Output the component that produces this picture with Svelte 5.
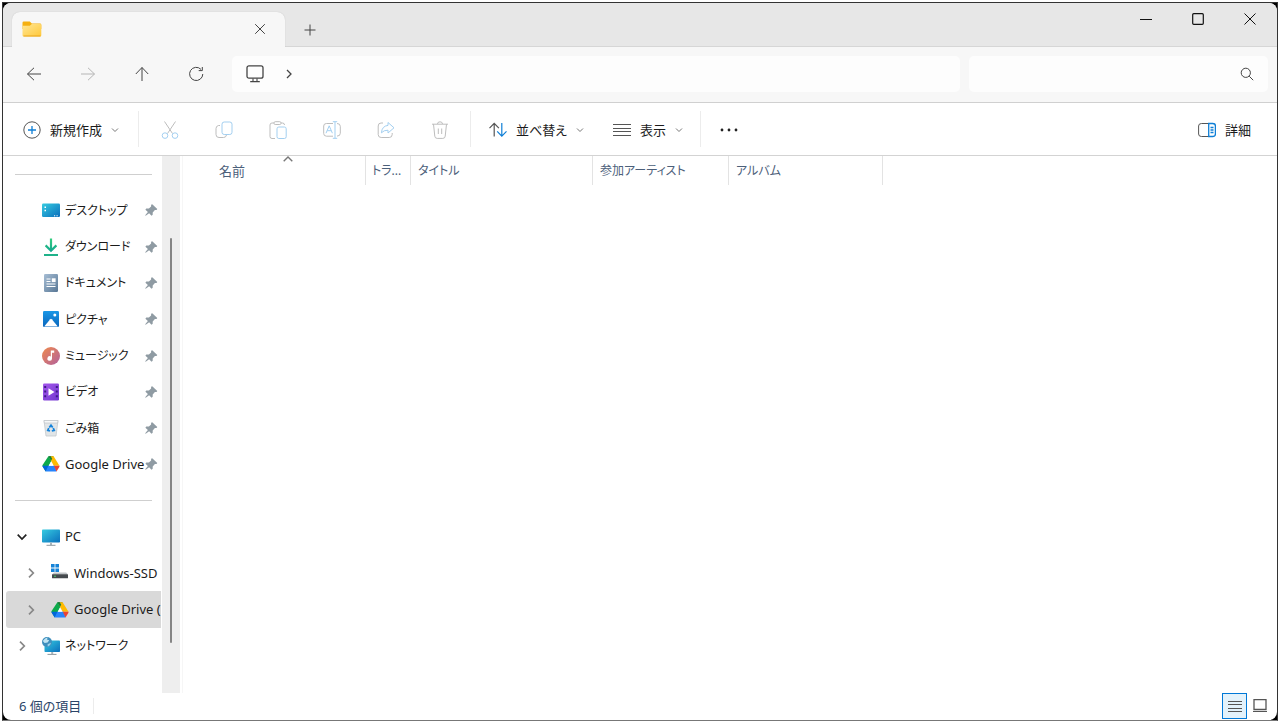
<script lang="ts">
	type Place = { name: string; icon: string };
	type Node = Place & { level: number; open?: boolean; selected?: boolean };

	const pinned: Place[] = [
		{ name: 'デスクトップ', icon: 'desktop' },
		{ name: 'ダウンロード', icon: 'download' },
		{ name: 'ドキュメント', icon: 'document' },
		{ name: 'ピクチャ', icon: 'picture' },
		{ name: 'ミュージック', icon: 'music' },
		{ name: 'ビデオ', icon: 'video' },
		{ name: 'ごみ箱', icon: 'trash' },
		{ name: 'Google Drive', icon: 'gdrive' }
	];

	const tree: Node[] = [
		{ name: 'PC', icon: 'pc', level: 0, open: true },
		{ name: 'Windows-SSD', icon: 'ssd', level: 1 },
		{ name: 'Google Drive (', icon: 'gdrive', level: 1, selected: true },
		{ name: 'ネットワーク', icon: 'network', level: 0 }
	];

	const columns = ['名前', 'トラ...', 'タイトル', '参加アーティスト', 'アルバム'];

	let address = $state('');
	let query = $state('');

	// kana runs wider than latin, so it is set one size down
	const isLatin = (name: string) => /^[A-Za-z]/.test(name);
</script>

{#snippet placeIcon(name: string)}
	<svg class="place-icon" viewBox="0 0 18 18" aria-hidden="true">
		{#if name === 'desktop'}
			<rect x="0" y="2.5" width="18" height="13.5" rx="1.2" fill="url(#teal)" />
			<path d="M2.5 6.2H4M2.5 9.5H4" stroke="#fff" stroke-width="1.5" />
			<path d="M12 14.8h1.2M14.5 14.8h1.2" stroke="#fff" stroke-width="1" />
		{:else if name === 'download'}
			<path d="M9 .5V12M3.6 7.4L9 12.8l5.4-5.4" fill="none" stroke="url(#green)" stroke-width="2.2" />
			<path d="M2 17h14" stroke="#1fb28a" stroke-width="2" />
		{:else if name === 'document'}
			<rect x="2" y="0" width="14" height="18" rx="1.2" fill="url(#slate)" />
			<path d="M4.5 5h4M4.5 7.5h4M4.5 10h9M4.5 12.5h9" stroke="#fff" stroke-width="1.2" />
			<rect x="9.8" y="4.3" width="3.8" height="3.8" fill="#fff" />
		{:else if name === 'picture'}
			<rect x="1" y="1" width="16" height="16" rx="1.2" fill="url(#blue)" />
			<path d="M2.2 16.5l6-7.2q.8-.9 1.6 0l6 7.2z" fill="#fff" />
			<circle cx="12.8" cy="5" r="1.5" fill="#fff" />
		{:else if name === 'music'}
			<circle cx="9" cy="9" r="9" fill="url(#coral)" />
			<path d="M8.8 3.5h3.4v2.3H10v5.7a2.3 2.3 0 1 1-1.2-2z" fill="#fff" />
		{:else if name === 'video'}
			<rect x="1" y="0.5" width="16" height="17" rx="1.2" fill="url(#violet)" />
			<path d="M3.2 3v13M14.8 3v13" stroke="#3d1b88" stroke-width="2" stroke-dasharray="2 2.6" />
			<path d="M6.5 5.3l6 3.7-6 3.7z" fill="#fff" />
		{:else if name === 'trash'}
			<path d="M2 1.5h14l-2 15.5H4z" fill="#e1e5e7" stroke="#c3c9cd" stroke-width=".8" />
			<path d="M2 1.5h14l-.4 2.5H2.4z" fill="#f7f8f8" stroke="#b8bec3" stroke-width=".6" />
			<path
				d="M7.3 8.5L9 6.3l1.7 2.2M11.2 9.2l1 2.2-2.4.6M8 12l-2.2-.6 1-2.2"
				fill="none"
				stroke="#1383dc"
				stroke-width="1.8"
			/>
		{:else if name === 'gdrive'}
			<path d="M6.4 1.2h5.2L9 6z" fill="#188038" />
			<path d="M6.4 1.2L9.4 6 3.8 16.4.6 11.2q-.4-.7 0-1.3z" fill="#0caa4b" />
			<path d="M11.6 1.2l5.9 9.6h-5.8L8.4 4.6l.4-3.4z" fill="#ffba00" />
			<path d="M8.7 1.2h-2.3L9 5.8l1.2-2z" fill="#188038" />
			<path d="M5.6 10.8h7l2 5.6H3.6z" fill="#2684fc" />
			<path d="M.4 10.8h6l-2.8 5.6-2.9-4.7z" fill="#0066da" />
			<path d="M11.8 10.8h5.8q0 .6-.3 1.1l-2.8 4.5z" fill="#ea4335" />
			<path d="M9 6.6l2.4 4.2H6.7z" fill="#fff" />
		{:else if name === 'pc'}
			{@render monitor()}
		{:else if name === 'ssd'}
			<path d="M0 0h3.6v3.6H0zM4.4 0H8v3.6H4.4zM0 4.4h3.6V8H0zM4.4 4.4H8V8H4.4z" fill="#1683d8" />
			<path d="M3 8.5h12.2l1.8 2H1z" fill="#bfc3c6" />
			<rect x="1" y="10.3" width="16" height="4" rx=".5" fill="#454a4e" />
			<circle cx="4" cy="12.3" r=".8" fill="#4be06a" />
		{:else if name === 'network'}
			<rect x="2.5" y="3.5" width="15.5" height="11.5" rx=".8" fill="url(#teal)" />
			<path d="M9.2 15h2v2h-2z" fill="#a9b4ba" />
			<path d="M5.5 17.4h9" stroke="#8d989e" stroke-width="1" />
			<circle cx="5" cy="5" r="5" fill="#3f8fbd" />
			<path d="M.8 4q2-3.2 5-3.6L4.8 2.6l2.4.6-1.6 2.4L2.6 6z" fill="#bfe4f3" />
			<path d="M5.6 7.2l3.4-1.4Q8.6 8.8 5.8 9.8z" fill="#9bd3ea" />
		{/if}
	</svg>
{/snippet}

{#snippet monitor()}
	<rect x="0" y="1.5" width="18" height="13" rx=".8" fill="url(#teal)" />
	<path d="M8 14.5h2v2.5H8z" fill="#a9b4ba" />
	<path d="M4.5 17.3h9" stroke="#8d989e" stroke-width="1" />
{/snippet}

{#snippet caret()}
	<svg class="caret" viewBox="0 0 8 8" aria-hidden="true"><path d="M1 2.5l3 3 3-3" /></svg>
{/snippet}

<svg class="defs" aria-hidden="true">
	<defs>
		<linearGradient id="teal" x1="0" y1="0" x2="1" y2="1">
			<stop offset="0" stop-color="#35cbe0" />
			<stop offset="1" stop-color="#0b6fbd" />
		</linearGradient>
		<linearGradient id="green" gradientUnits="userSpaceOnUse" x1="9" y1="0" x2="9" y2="14">
			<stop offset="0" stop-color="#34cf7d" />
			<stop offset="1" stop-color="#12a590" />
		</linearGradient>
		<linearGradient id="slate" x1="0" y1="0" x2="1" y2="1">
			<stop offset="0" stop-color="#a6bdd4" />
			<stop offset="1" stop-color="#587795" />
		</linearGradient>
		<linearGradient id="blue" x1="0" y1="0" x2="0" y2="1">
			<stop offset="0" stop-color="#1a97e6" />
			<stop offset="1" stop-color="#0a66bd" />
		</linearGradient>
		<linearGradient id="coral" x1="0" y1="0" x2="1" y2="1">
			<stop offset="0" stop-color="#f08a4c" />
			<stop offset="1" stop-color="#b1609e" />
		</linearGradient>
		<linearGradient id="violet" x1="0" y1="0" x2="1" y2="1">
			<stop offset="0" stop-color="#a457ec" />
			<stop offset="1" stop-color="#7238cf" />
		</linearGradient>
		<linearGradient id="folder" x1="0" y1="0" x2="1" y2="1">
			<stop offset="0" stop-color="#ffe694" />
			<stop offset="1" stop-color="#ffc83a" />
		</linearGradient>
	</defs>
</svg>

<div class="screen">
	<div class="frame">
		<div class="window">
			<header class="titlebar">
				<div class="tab">
					<svg class="folder" viewBox="0 0 20 16" aria-hidden="true">
						<path d="M1.8.5h6l2 2H18q1.3 0 1.3 1.3V8H.5V1.8Q.5.5 1.8.5z" fill="#f5b011" />
						<path d="M.5 4.8h7.3l2-1.8H18q1.3 0 1.3 1.3v9.9q0 1.3-1.3 1.3H1.8q-1.3 0-1.3-1.3z" fill="url(#folder)" />
						<path d="M1.5 15h17" stroke="#e9a51c" />
					</svg>
					<button class="tab-close" aria-label="タブを閉じる">
						<svg class="icon-12" viewBox="0 0 12 12"><path d="M1.2 1.2l9.6 9.6M10.8 1.2l-9.6 9.6" /></svg>
					</button>
				</div>
				<button class="new-tab" aria-label="新しいタブ">
					<svg class="icon-12" viewBox="0 0 12 12"><path d="M6 .5v11M.5 6h11" /></svg>
				</button>
				<div class="controls">
					<button aria-label="最小化">
						<svg class="icon-12" viewBox="0 0 12 12"><path d="M0 6.5h12" /></svg>
					</button>
					<button aria-label="最大化">
						<svg class="icon-12" viewBox="0 0 12 12"
							><rect x=".7" y=".7" width="10.6" height="10.6" rx="1" stroke-width="1.2" /></svg
						>
					</button>
					<button aria-label="閉じる">
						<svg class="icon-12" viewBox="0 0 12 12"><path d="M.5.5l11 11M11.5.5l-11 11" /></svg>
					</button>
				</div>
			</header>

			<div class="navbar">
				<div class="nav-buttons">
					<button aria-label="戻る">
						<svg class="icon-16" viewBox="0 0 16 16"><path d="M15 8H1.5M8 1.8L1.5 8 8 14.2" /></svg>
					</button>
					<button aria-label="進む" disabled>
						<svg class="icon-16" viewBox="0 0 16 16"><path d="M1 8h13.5M8 1.8L14.5 8 8 14.2" /></svg>
					</button>
					<button aria-label="上へ">
						<svg class="icon-16" viewBox="0 0 16 16"><path d="M8 15V1.5M1.8 8L8 1.5 14.2 8" /></svg>
					</button>
					<button aria-label="更新">
						<svg class="icon-16" viewBox="0 0 16 16"
							><path d="M13 3.4A6.6 6.6 0 1 0 14.8 8M14.3 1v3.6h-3.6" /></svg
						>
					</button>
				</div>
				<div class="address">
					<svg class="icon-18" viewBox="0 0 18 18" aria-hidden="true">
						<rect x="1" y=".8" width="16" height="12.4" rx="2" stroke-width="1.3" />
						<path d="M7 13.5v3M11 13.5v3M4.2 16.6h9.6" stroke-width="1.1" />
					</svg>
					<svg class="crumb" viewBox="0 0 8 12" aria-hidden="true"><path d="M2 2l4 4-4 4" /></svg>
					<input type="text" aria-label="アドレス" bind:value={address} />
				</div>
				<div class="search">
					<input type="text" aria-label="検索" bind:value={query} />
					<svg class="icon-14" viewBox="0 0 14 14" aria-hidden="true">
						<circle cx="5.8" cy="5.8" r="4.6" />
						<path d="M9.2 9.2l4 4" />
					</svg>
				</div>
			</div>

			<div class="toolbar">
				<button class="new">
					<svg class="icon-18" viewBox="0 0 18 18" aria-hidden="true">
						<circle cx="9" cy="9" r="8.2" />
						<path class="accent" d="M9 5v8M5 9h8" stroke-width="1.3" />
					</svg>
					<span>新規作成</span>
					{@render caret()}
				</button>
				<div class="group">
					<button disabled aria-label="切り取り">
						<svg class="icon-18" viewBox="0 0 18 18">
							<path d="M3.5.5l8 12M14.5.5l-8 12" />
							<g class="accent">
								<circle cx="4" cy="14.6" r="2.8" />
								<circle cx="14" cy="14.6" r="2.8" />
							</g>
						</svg>
					</button>
					<button disabled aria-label="コピー">
						<svg class="icon-18" viewBox="0 0 18 18">
							<path d="M5 4.5H3.5Q1 5 1 7.5v6Q1 16.5 4 16.5h4.5q2.5 0 3-2.5" />
							<rect class="accent" x="7" y="1" width="10" height="12.5" rx="2.2" />
						</svg>
					</button>
					<button disabled aria-label="貼り付け">
						<svg class="icon-18" viewBox="0 0 18 18">
							<path d="M5 2H3Q1 2 1 4v11.5q0 2 2 2h3M12 2h1.5q2 0 2 2" />
							<rect x="5" y=".7" width="7" height="2.8" rx="1.2" />
							<rect class="accent" x="8" y="6" width="9.2" height="11.5" rx="1.8" />
						</svg>
					</button>
					<button disabled aria-label="名前の変更">
						<svg class="icon-18" viewBox="0 0 18 18">
							<path d="M10 2.5H3.5Q.7 2.5.7 5v7.5q0 2.7 2.8 2.7H10M14 2.5q3.3 0 3.3 2.8v7q0 2.8-3.3 2.8" />
							<path class="accent" d="M12 .7v16.6M9.8.7h4.4M9.8 17.3h4.4M3 12.2l3.2-7.4 3.2 7.4M4.2 9.7h4" />
						</svg>
					</button>
					<button disabled aria-label="共有">
						<svg class="icon-18" viewBox="0 0 18 18">
							<path d="M6 2H4Q1.2 2 1.2 5v8.5q0 3 3 3h8q3 0 3-3V12" />
							<path
								class="accent"
								d="M11 1.5l6 5.3-6 5.2V9.2q-4-.2-6.6 2.6Q5 5 11 4.4z"
								stroke-linejoin="round"
							/>
						</svg>
					</button>
					<button disabled aria-label="削除">
						<svg class="icon-18" viewBox="0 0 18 18">
							<path
								d="M1 3.2h16M6.5 3Q6.5.8 9 .8T11.5 3M2.5 3.2l1.3 12q.2 2.2 2.4 2.2h5.6q2.2 0 2.4-2.2l1.3-12M7.3 7.5v5.5M10.7 7.5v5.5"
							/>
						</svg>
					</button>
				</div>
				<button class="sort">
					<svg class="icon-18" viewBox="0 0 18 18" aria-hidden="true">
						<path d="M5.2 15.5V2.5M.5 7.2l4.7-4.9 4.7 4.9" stroke-width="1.2" />
						<path class="accent" d="M12.8 2v13M8.2 10.4l4.6 4.8 4.7-4.8" stroke-width="1.2" />
					</svg>
					<span>並べ替え</span>
					{@render caret()}
				</button>
				<button class="view">
					<svg class="icon-18" viewBox="0 0 18 18" aria-hidden="true"
						><path d="M0 3.5h18M0 7.5h18M0 10.5h18M0 14.5h18" /></svg
					>
					<span>表示</span>
					{@render caret()}
				</button>
				<button class="more" aria-label="もっと見る">
					<svg class="icon-18" viewBox="0 0 18 18">
						<circle cx="2" cy="9" r="1.4" />
						<circle cx="9" cy="9" r="1.4" />
						<circle cx="16" cy="9" r="1.4" />
					</svg>
				</button>
				<button class="details">
					<svg class="icon-18" viewBox="0 0 18 18" aria-hidden="true">
						<path d="M11 2.5H3.5Q.6 2.5.6 5v8q0 2.5 2.9 2.5H11" />
						<path
							class="accent"
							d="M10.7 2.5h4q2.7 0 2.7 2.5v8q0 2.5-2.7 2.5h-4zM12.5 6.5h3M12.5 9h3M12.5 11.5h3"
							stroke-width="1.3"
						/>
					</svg>
					<span>詳細</span>
				</button>
			</div>

			<div class="body">
				<nav class="places">
					<hr />
					{#each pinned as place}
						<a class="row" href="#{place.icon}">
							<span class="chevron"></span>
							{@render placeIcon(place.icon)}
							<span class="name" class:latin={isLatin(place.name)}>{place.name}</span>
							<svg class="pin" viewBox="0 0 14 14" aria-hidden="true"
								><path d="M8.2 1.2L13.3 6l-.8 1.1-1.6-.1-2.2 2.4v2.4l-1.2.9-2.4-2.5-3.4 2.5-.5-.5 2.7-3.2-2.5-2.3.9-1.2 2.6.1 2.2-2.2V1.8z" /></svg
							>
						</a>
					{/each}
					<hr />
					{#each tree as node}
						<a class="row" class:nested={node.level > 0} class:selected={node.selected} href="#{node.icon}">
							<svg class="chevron" class:open={node.open} viewBox="0 0 10 10" aria-hidden="true">
								<path d={node.open ? 'M.7 2.7L5 7l4.3-4.3' : 'M3 .7L7.3 5 3 9.3'} />
							</svg>
							{@render placeIcon(node.icon)}
							<span class="name" class:latin={isLatin(node.name)}>{node.name}</span>
						</a>
					{/each}
				</nav>
				<div class="scrollbar"><div class="thumb"></div></div>
				<main class="files">
					<table>
						<thead>
							<tr>
								{#each columns as column, i}
									<th scope="col">
										{column}
										{#if i === 0}
											<svg class="sorted" viewBox="0 0 10 6" aria-hidden="true"><path d="M.7 5.3L5 1l4.3 4.3" /></svg>
										{/if}
									</th>
								{/each}
							</tr>
						</thead>
					</table>
				</main>
			</div>

			<footer class="status">
				<span class="count">6 個の項目</span>
				<button class="mode active" aria-label="詳細表示">
					<svg class="icon-14" viewBox="0 0 14 14"><path d="M0 2.5h14M0 5.5h14M0 9.5h14M0 12.5h14" /></svg>
				</button>
				<button class="mode" aria-label="大アイコン">
					<svg class="icon-14" viewBox="0 0 14 14"
						><path d="M1 .7h12v9.8H1z" stroke-width="1.3" /><path d="M0 12.5h14" /></svg
					>
				</button>
			</footer>
		</div>
	</div>
</div>

<style>
	:global(body) {
		background: #fff;
	}
	.defs {
		position: absolute;
		width: 0;
		height: 0;
	}
	.screen {
		box-sizing: border-box;
		display: flex;
		min-height: 100vh;
		padding: 2px;
		font-family: 'Noto Sans', 'Noto Sans CJK JP', sans-serif;
		font-size: 13px;
		font-feature-settings: 'palt';
		color: #1b1b1b;
	}
	.frame {
		display: flex;
		flex: 1;
		min-width: 0;
		background: #000;
		border: 1px solid #333;
		border-bottom-color: #777;
	}
	.window {
		display: flex;
		flex: 1;
		flex-direction: column;
		min-width: 0;
		overflow: hidden;
		background: #fff;
		border-radius: 8px;
	}
	button {
		display: flex;
		align-items: center;
		justify-content: center;
		padding: 0;
		border: 0;
		background: none;
		color: inherit;
		font: inherit;
		font-feature-settings: inherit;
		white-space: nowrap;
	}
	input {
		flex: 1;
		min-width: 0;
		border: 0;
		outline: 0;
		background: none;
		font: inherit;
	}
	svg {
		flex: none;
		fill: none;
		stroke: currentColor;
	}
	.icon-12 {
		width: 12px;
		height: 12px;
	}
	.icon-14 {
		width: 14px;
		height: 14px;
	}
	.icon-16 {
		width: 16px;
		height: 16px;
	}
	.icon-18 {
		width: 18px;
		height: 18px;
	}
	.accent {
		stroke: #0f7fd6;
	}

	.titlebar {
		display: flex;
		height: 44px;
		background: #e7e7e7;
		box-shadow: inset 0 -1px #d6d6d6;
	}
	.tab {
		display: flex;
		align-items: center;
		justify-content: space-between;
		box-sizing: border-box;
		width: 273px;
		margin: 9px 0 0 9px;
		padding: 0 19px 2px 10px;
		background: #f7f7f7;
		border-radius: 8px 8px 0 0;
		box-shadow: 0 0 1px #bbb;
		clip-path: inset(-1px -1px 0 -1px);
	}
	.folder {
		width: 20px;
		height: 16px;
		stroke: none;
	}
	.tab-close {
		color: #444;
	}
	.new-tab {
		width: 50px;
		padding-top: 10px;
		color: #444;
	}
	.controls {
		display: flex;
		margin-left: auto;
		padding-right: 1px;
		height: 32px;
	}
	.controls button {
		width: 52px;
		color: #111;
	}

	.navbar {
		display: flex;
		align-items: center;
		gap: 9px;
		box-sizing: border-box;
		height: 56px;
		padding: 0 9px 1px 4px;
		background: #f7f7f7;
		border-bottom: 1px solid #d0d0d0;
	}
	.nav-buttons {
		display: flex;
		color: #444;
	}
	.nav-buttons button {
		width: 54px;
		height: 36px;
	}
	.nav-buttons button:disabled {
		color: #b5b5b5;
	}
	.address,
	.search {
		display: flex;
		align-items: center;
		box-sizing: border-box;
		height: 36px;
		background: #fdfdfd;
		border-radius: 5px;
		color: #444;
	}
	.address {
		flex: 1;
		gap: 21px;
		padding: 0 14px;
	}
	.crumb {
		width: 8px;
		height: 12px;
		stroke-width: 1.3;
	}
	.search {
		flex: 0 1 299px;
		padding: 0 14px;
	}

	.toolbar {
		display: flex;
		align-items: center;
		height: 52px;
		border-bottom: 1px solid #d3d3d3;
	}
	.toolbar svg {
		color: #555;
	}
	.toolbar button {
		height: 36px;
		padding-top: 1px;
	}
	.toolbar .caret {
		width: 8px;
		height: 8px;
		color: #777;
	}
	.new,
	.sort,
	.view,
	.details {
		gap: 9px;
		box-sizing: border-box;
	}
	.toolbar .new {
		justify-content: flex-start;
		width: 135px;
		padding-left: 20px;
	}
	.group {
		display: flex;
		padding: 0 3px 0 4px;
		border-left: 1px solid #ececec;
		border-right: 1px solid #ececec;
	}
	.group button {
		width: 54px;
	}
	.group button svg {
		color: #bdbdbd;
	}
	.group .accent {
		stroke: #a3cff0;
	}
	.toolbar .sort,
	.toolbar .view {
		justify-content: flex-start;
		height: 36px;
		padding-left: 18px;
	}
	.toolbar .sort {
		width: 124px;
	}
	.toolbar .view {
		width: 106px;
		border-right: 1px solid #ececec;
	}
	.toolbar .more {
		width: 56px;
	}
	.more svg {
		fill: #222;
		stroke: none;
	}
	.toolbar .details {
		margin-left: auto;
		padding-right: 26px;
	}

	.body {
		display: flex;
		flex: 1;
	}
	/* every row, rules included, takes an equal share of the pane */
	.places {
		display: grid;
		grid-auto-rows: minmax(28px, 1fr);
		box-sizing: border-box;
		flex: 0 0 159px;
		width: 159px;
		padding: 0 1px 29px 3px;
	}
	hr {
		align-self: center;
		height: 1px;
		margin: 0 9px;
		border: 0;
		background: #cfcfcf;
	}
	.row {
		display: flex;
		align-items: center;
		min-width: 0;
		padding: 0 3px 0 11px;
		overflow: hidden;
		color: inherit;
		font-size: 12px;
		text-decoration: none;
		white-space: nowrap;
	}
	.row.nested {
		padding: 0 0 0 20px;
	}
	.selected {
		background: #d9d9d9;
		border-radius: 3px 0 0 3px;
	}
	.chevron {
		flex: none;
		width: 10px;
		height: 10px;
		margin-right: 15px;
		color: #888;
		stroke-width: 1.7;
	}
	.chevron.open {
		color: #222;
	}
	.place-icon {
		width: 18px;
		height: 18px;
		margin-right: 5px;
		stroke: none;
	}
	.name {
		flex: 1;
		min-width: 0;
		padding-bottom: 1px;
	}
	.latin {
		font-size: 13px;
	}
	.pin {
		width: 14px;
		height: 14px;
		fill: #8f9ba3;
		stroke: none;
	}
	.scrollbar {
		display: flex;
		justify-content: center;
		flex: 0 0 18px;
		padding: 82px 0 50px;
		box-sizing: border-box;
		background: #eee;
	}
	.thumb {
		width: 2px;
		border-radius: 1px;
		background: #858585;
	}
	.files {
		flex: 1;
		min-width: 0;
		margin-left: 2px;
		border-left: 1px solid #f6f6f6;
	}
	table {
		width: 700px;
		table-layout: fixed;
		border-collapse: separate;
		border-spacing: 0;
	}
	th {
		position: relative;
		box-sizing: border-box;
		height: 29px;
		padding: 0 0 1px 7px;
		border-right: 1px solid #e3e3e3;
		color: #4c607a;
		font-size: 12px;
		font-weight: 400;
		text-align: left;
		white-space: nowrap;
	}
	th:nth-child(1) {
		width: 183px;
		padding-left: 36px;
		font-size: 13px;
	}
	th:nth-child(2) {
		width: 45px;
		padding-left: 6px;
	}
	th:nth-child(3) {
		width: 182px;
	}
	th:nth-child(4) {
		width: 136px;
	}
	th:nth-child(5) {
		width: 154px;
	}
	.sorted {
		position: absolute;
		top: 0;
		left: 100px;
		width: 10px;
		height: 6px;
		color: #777;
		stroke-width: 1.4;
	}

	.status {
		display: flex;
		align-items: center;
		box-sizing: border-box;
		height: 27px;
		padding: 0 5px 1px 16px;
		color: #2b4568;
	}
	.count {
		width: 74px;
		margin-right: auto;
		border-right: 1px solid #ececec;
		line-height: 16px;
	}
	.mode {
		box-sizing: border-box;
		width: 25px;
		height: 26px;
		color: #555;
	}
	.mode.active {
		border: 1px solid #0078d7;
		background: #e3f2fb;
	}
</style>
